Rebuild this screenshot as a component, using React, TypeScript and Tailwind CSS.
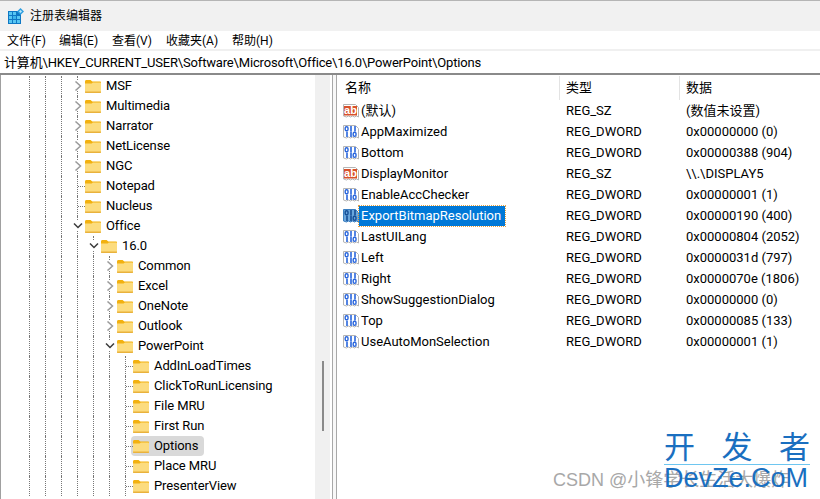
import React from 'react';
import { clsx } from 'clsx';

const FolderIcon = () => (
  <svg width="16" height="16" viewBox="0 0 16 16" className="shrink-0">
    <path d="M0 3.5C0 2.7.6 2 1.4 2h3.7c.4 0 .7.1 1 .4L7.4 3.5H15c.6 0 1 .4 1 1V6H0z" fill="#f2b10f" />
    <path d="M0 5.6h6.6l1.3-1.2H15c.6 0 1 .4 1 1V14c0 .6-.4 1-1 1H1c-.6 0-1-.4-1-1z" fill="#fcdc7e" />
    <path d="M0 13.6h16v.4c0 .6-.4 1-1 1H1c-.6 0-1-.4-1-1z" fill="#e9b23c" />
  </svg>
);

const Chevron = ({ open }: { open?: boolean }) => (
  <svg width="10" height="10" viewBox="0 0 10 10" className="absolute left-[-5px] top-[5px] bg-white">
    {open ? (
      <path d="M1 2.5 5 6.5 9 2.5" fill="none" stroke="#3b3b3b" strokeWidth="1.5" />
    ) : (
      <path d="M2.5.5 7.5 5 2.5 9.5" fill="none" stroke="#9a9a9a" strokeWidth="1.5" />
    )}
  </svg>
);

const paperPath = 'M.5 1.5h12l3 3v9.5l-2-1-2 1-2-1-2 1-2-1-2 1-3-1z';

const StringIcon = () => (
  <svg width="16" height="16" viewBox="0 0 16 16" className="shrink-0">
    <path d={paperPath} fill="#fff" stroke="#b5b5b5" />
    <rect x="1" y="3" width="13" height="9.5" fill="#d8512b" />
    <text x="7.5" y="11" textAnchor="middle" fontSize="11" fontWeight="700" fill="#fff" fontFamily="Liberation Sans, sans-serif">ab</text>
  </svg>
);

const BinaryIcon = ({ selected }: { selected?: boolean }) => {
  const c = selected ? '#174f96' : '#2a66dc';
  return (
    <svg width="16" height="16" viewBox="0 0 16 16" className="shrink-0">
      <path d={paperPath} fill={selected ? '#6aa6dc' : '#fff'} stroke={selected ? '#3c7fc0' : '#b5b5b5'} />
      <g fill="none" stroke={c} strokeWidth="1.4">
        <rect x="2.2" y="2.8" width="2.8" height="3.9" rx="1.3" />
        <rect x="10.2" y="8.3" width="2.8" height="3.9" rx="1.3" />
      </g>
      <g fill={c}>
        <rect x="7.2" y="2" width="1.6" height="5.5" />
        <rect x="11.2" y="2" width="1.6" height="5.5" />
        <rect x="3.2" y="7.6" width="1.6" height="5.4" />
        <rect x="7.2" y="7.6" width="1.6" height="5.4" />
      </g>
    </svg>
  );
};

const AppIcon = () => (
  <svg width="16" height="16" viewBox="0 0 16 16" className="shrink-0">
    <rect x="0" y="3" width="13" height="13" fill="#0f78c4" />
    <g fill="#58c6f2">
      <rect x="1" y="4" width="3" height="3" />
      <rect x="5" y="4" width="3" height="3" />
      <rect x="1" y="8" width="3" height="3" />
      <rect x="5" y="8" width="3" height="3" fill="#3cb4ea" />
      <rect x="9" y="8" width="3" height="3" />
      <rect x="1" y="12" width="3" height="3" />
      <rect x="5" y="12" width="3" height="3" />
      <rect x="9" y="12" width="3" height="3" />
    </g>
    <path d="M12.5 0 16 3.5 12.5 7 9 3.5z" fill="#2f9fe0" />
    <path d="M12.5 2 14 3.5 12.5 5 11 3.5z" fill="#bfeafc" />
  </svg>
);

type TreeNode = {
  name: string;
  guides: number;
  kind: 'closed' | 'open' | 'leaf';
  selected?: boolean;
};

const treeRows: TreeNode[] = [
  { name: 'MSF', guides: 3, kind: 'closed' },
  { name: 'Multimedia', guides: 3, kind: 'closed' },
  { name: 'Narrator', guides: 3, kind: 'closed' },
  { name: 'NetLicense', guides: 3, kind: 'closed' },
  { name: 'NGC', guides: 3, kind: 'closed' },
  { name: 'Notepad', guides: 3, kind: 'leaf' },
  { name: 'Nucleus', guides: 3, kind: 'leaf' },
  { name: 'Office', guides: 3, kind: 'open' },
  { name: '16.0', guides: 4, kind: 'open' },
  { name: 'Common', guides: 5, kind: 'closed' },
  { name: 'Excel', guides: 5, kind: 'closed' },
  { name: 'OneNote', guides: 5, kind: 'closed' },
  { name: 'Outlook', guides: 5, kind: 'closed' },
  { name: 'PowerPoint', guides: 5, kind: 'open' },
  { name: 'AddInLoadTimes', guides: 6, kind: 'leaf' },
  { name: 'ClickToRunLicensing', guides: 6, kind: 'leaf' },
  { name: 'File MRU', guides: 6, kind: 'leaf' },
  { name: 'First Run', guides: 6, kind: 'leaf' },
  { name: 'Options', guides: 6, kind: 'leaf', selected: true },
  { name: 'Place MRU', guides: 6, kind: 'leaf' },
  { name: 'PresenterView', guides: 6, kind: 'leaf' },
];

const values: { name: string; type: string; data: string; str?: boolean; selected?: boolean }[] = [
  { name: '(默认)', type: 'REG_SZ', data: '(数值未设置)', str: true },
  { name: 'AppMaximized', type: 'REG_DWORD', data: '0x00000000 (0)' },
  { name: 'Bottom', type: 'REG_DWORD', data: '0x00000388 (904)' },
  { name: 'DisplayMonitor', type: 'REG_SZ', data: '\\\\.\\DISPLAY5', str: true },
  { name: 'EnableAccChecker', type: 'REG_DWORD', data: '0x00000001 (1)' },
  { name: 'ExportBitmapResolution', type: 'REG_DWORD', data: '0x00000190 (400)', selected: true },
  { name: 'LastUILang', type: 'REG_DWORD', data: '0x00000804 (2052)' },
  { name: 'Left', type: 'REG_DWORD', data: '0x0000031d (797)' },
  { name: 'Right', type: 'REG_DWORD', data: '0x0000070e (1806)' },
  { name: 'ShowSuggestionDialog', type: 'REG_DWORD', data: '0x00000000 (0)' },
  { name: 'Top', type: 'REG_DWORD', data: '0x00000085 (133)' },
  { name: 'UseAutoMonSelection', type: 'REG_DWORD', data: '0x00000001 (1)' },
];

const menus = [
  { label: '文件(F)', w: 'w-[52px]' },
  { label: '编辑(E)', w: 'w-[53px]' },
  { label: '查看(V)', w: 'w-[54px]' },
  { label: '收藏夹(A)', w: 'w-[66px]' },
  { label: '帮助(H)', w: 'w-[50px]' },
];

const TreeRow = ({ node }: { node: TreeNode }) => (
  <div className="flex h-5 items-stretch">
    {Array.from({ length: node.guides }).map((_, i) => (
      <div key={i} className="w-4 shrink-0 border-l border-dotted border-[#777]" />
    ))}
    <div className="relative w-2 shrink-0 border-l border-dotted border-[#777]">
      {node.kind === 'leaf' ? (
        <div className="mt-[10px] w-[7px] border-t border-dotted border-[#777]" />
      ) : (
        <Chevron open={node.kind === 'open'} />
      )}
    </div>
    <div className={clsx('-ml-0.5 flex items-center rounded-sm pl-0.5 pr-[6px]', node.selected && 'bg-[#d9d9d9]')}>
      <FolderIcon />
      <span className="ml-[5px] whitespace-nowrap tracking-[-0.1px]">{node.name}</span>
    </div>
  </div>
);

export default function App() {
  return (
    <div className="relative flex h-[499px] w-[820px] flex-col overflow-hidden bg-white text-[13px] leading-5 text-black [font-family:Roboto,'Noto_Sans_CJK_SC',sans-serif]">
      <div className="flex h-[31px] shrink-0 items-center border-t border-[#b5b5b5] bg-[#f1f1f1] pl-2">
        <AppIcon />
        <span className="ml-[6px] text-xs">注册表编辑器</span>
      </div>

      <div className="flex h-[18px] shrink-0 items-center pl-[7px] pt-0.5 text-xs">
        {menus.map(m => (
          <span key={m.label} className={clsx('whitespace-nowrap', m.w)}>{m.label}</span>
        ))}
      </div>

      <div className="h-[26px] shrink-0 border-b-2 border-[#8a8a8a] border-t-2 border-t-[#f0f0f0] pl-1 pt-px leading-[21px] tracking-[-0.17px]">
        计算机\HKEY_CURRENT_USER\Software\Microsoft\Office\16.0\PowerPoint\Options
      </div>

      <div className="flex min-h-0 flex-1">
        <div className="flex w-[332px] shrink-0 border-l border-[#a0a0a0]">
          <div className="min-w-0 flex-1 overflow-hidden pl-7 pt-px">
            {treeRows.map(node => (
              <TreeRow key={node.name} node={node} />
            ))}
          </div>
          <div className="relative mr-0.5 w-[15px] shrink-0 bg-[#f0f0f0]">
            <div className="absolute left-[7px] top-[286px] h-[70px] w-0.5 bg-[#8a8a8a]" />
          </div>
        </div>
        <div className="w-[5px] shrink-0 border-x border-x-[#a8a8a8] bg-[#f8f8f8]" />

        <div className="min-w-0 flex-1">
          <div className="flex h-[25px] pl-2">
            <div className="w-[214px] leading-[26px]">名称</div>
            <div className="mt-px w-[120px] border-l border-[#e3e3e3] pl-[6px] leading-6">类型</div>
            <div className="mt-px border-l border-[#e3e3e3] pl-[6px] leading-6">数据</div>
          </div>
          {values.map(v => (
            <div key={v.name} className="flex h-[21px] items-center pl-[6px]">
              <div className="flex w-[216px] items-center">
                {v.str ? <StringIcon /> : <BinaryIcon selected={v.selected} />}
                <span
                  className={clsx(
                    'whitespace-nowrap pl-0.5 pr-1 leading-[20px]',
                    v.selected && 'bg-[#0078d7] text-white outline-1 outline-dotted outline-[#e8a040]',
                  )}
                >
                  {v.name}
                </span>
              </div>
              <div className="w-[120px] pl-[7px]">{v.type}</div>
              <div className="pl-[7px] whitespace-nowrap">{v.data}</div>
            </div>
          ))}
        </div>
      </div>

      <div className="absolute left-[553px] top-[469px] whitespace-nowrap text-[18px] leading-[22px] text-[#a8a8a8] [font-family:'Liberation_Sans','Noto_Sans_CJK_SC',sans-serif]">
        CSDN @小锋学长生活大爆炸
      </div>
      <div className="absolute left-[664px] top-[431px] w-[146px]">
        <div className="flex justify-between border-b border-[#6ec6f0] text-[31px] leading-[33px] text-[#1a6fc0]">
          <span>开</span>
          <span>发</span>
          <span>者</span>
        </div>
        <div className="whitespace-nowrap text-[27px] leading-[26px] text-[#1a6fc0] [font-family:'Liberation_Sans',sans-serif]">
          DevZe.CoM
        </div>
      </div>
    </div>
  );
}
